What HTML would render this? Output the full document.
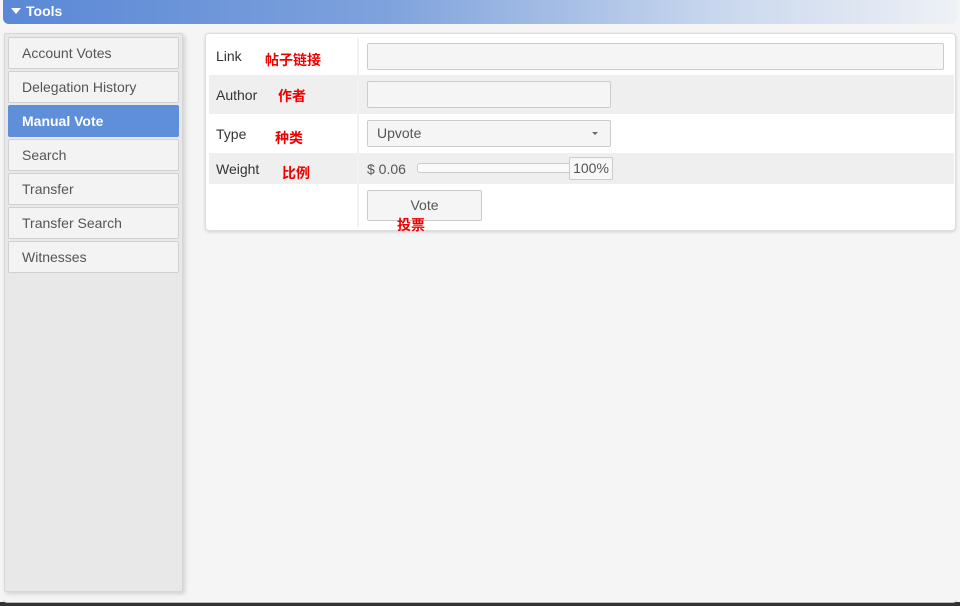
<!DOCTYPE html>
<html><head><meta charset="utf-8"><style>
*{box-sizing:border-box;margin:0;padding:0}
body{width:960px;height:606px;background:#f5f5f5;font-family:"Liberation Sans","Noto Sans CJK SC",sans-serif;position:relative;overflow:hidden;color:#333}
.hdr{position:absolute;left:3px;top:0;width:954px;height:24px;border-radius:0 0 6px 6px;background:linear-gradient(90deg,#5a88d6 0%,#7ea2dc 40%,#c9d7ee 75%,#eef1f6 100%);color:#fff;font-size:14px;font-weight:bold;line-height:23px;padding-left:8px}
.hdr:before{content:"";display:inline-block;border-left:5px solid transparent;border-right:5px solid transparent;border-top:6px solid #fff;margin-right:5px;vertical-align:2px}
.side{position:absolute;left:4px;top:33px;width:179px;height:559px;background:#e8e8e8;border:1px solid #d6d6d6;border-radius:2px;box-shadow:2px 2px 5px rgba(0,0,0,.15)}
.btn{position:absolute;left:3px;width:171px;height:32px;background:#f3f3f3;border:1px solid #d0d0d0;border-radius:2px;font-size:14px;color:#555;line-height:30px;padding-left:13px}
.btn.on{background:#5f8fd8;color:#fff;font-weight:bold;border-color:#5f8fd8}
.card{position:absolute;left:205px;top:33px;width:751px;height:198px;background:#fff;border:1px solid #ddd;border-radius:4px;box-shadow:0 1px 3px rgba(0,0,0,.15)}
.row{position:absolute;left:3px;width:745px}
.lab{position:absolute;left:7px;font-size:14px;color:#333}
.cn{position:absolute;color:#e00;font-size:14px;font-weight:bold}
.sep{position:absolute;left:148px;top:0;bottom:0;width:2px;background:#f2f2f2}
.inp{position:absolute;background:#f5f5f5;border:1px solid #ccc;border-radius:2px;height:27px}
</style></head><body>
<div class="hdr">Tools</div>
<div class="side">
<div class="btn" style="top:3px">Account Votes</div>
<div class="btn" style="top:37px">Delegation History</div>
<div class="btn on" style="top:71px">Manual Vote</div>
<div class="btn" style="top:105px">Search</div>
<div class="btn" style="top:139px">Transfer</div>
<div class="btn" style="top:173px">Transfer Search</div>
<div class="btn" style="top:207px">Witnesses</div>
</div>
<div class="card">
<div class="row" style="top:4px;height:37px;background:#fff"><div class="sep"></div><span class="lab" style="top:10px">Link</span><span class="cn" style="left:56px;top:12px">帖子链接</span><div class="inp" style="left:158px;top:5px;width:577px"></div></div>
<div class="row" style="top:41px;height:39px;background:#efefef"><div class="sep"></div><span class="lab" style="top:12px">Author</span><span class="cn" style="left:69px;top:11px">作者</span><div class="inp" style="left:158px;top:6px;width:244px"></div></div>
<div class="row" style="top:80px;height:39px;background:#fff"><div class="sep"></div><span class="lab" style="top:12px">Type</span><span class="cn" style="left:66px;top:14px">种类</span><div class="inp" style="left:158px;top:6px;width:244px;font-size:14px;color:#555;line-height:25px;padding-left:9px">Upvote<span style="position:absolute;right:12px;top:11px;border-left:3px solid transparent;border-right:3px solid transparent;border-top:3px solid #666"></span></div></div>
<div class="row" style="top:119px;height:31px;background:#efefef"><div class="sep"></div><span class="lab" style="top:8px">Weight</span><span class="cn" style="left:73px;top:10px">比例</span><span style="position:absolute;left:158px;top:8px;font-size:14px;color:#555">$ 0.06</span><div style="position:absolute;left:208px;top:10px;width:155px;height:10px;background:#fafafa;border:1px solid #ccc;border-radius:3px"></div><div style="position:absolute;left:360px;top:4px;width:44px;height:23px;background:#f7f7f7;border:1px solid #ccc;border-radius:2px;font-size:14px;color:#555;text-align:center;line-height:21px">100%</div></div>
<div class="row" style="top:150px;height:43px;background:#fff"><div class="sep"></div><div class="inp" style="left:158px;top:6px;width:115px;height:31px;font-size:14px;color:#555;text-align:center;line-height:29px">Vote</div><span class="cn" style="left:188px;top:31px">投票</span></div>
</div>
<div style="position:absolute;left:0;top:602px;width:960px;height:4px;background:#333"></div>
<div style="position:absolute;left:3px;top:598px;width:954px;height:5px;background:#f5f5f5;border-radius:0 0 4px 4px;border-bottom:1px solid #bbb"></div>
</body></html>
